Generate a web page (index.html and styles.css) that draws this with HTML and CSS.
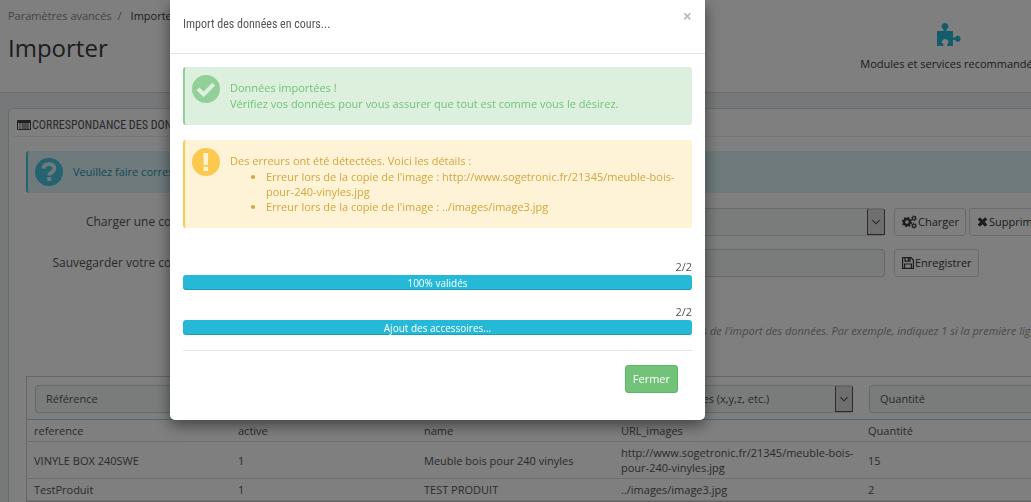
FILE: index.html
```html
<!DOCTYPE html>
<html lang="fr">
<head>
<meta charset="utf-8">
<title>Importer</title>
<link rel="stylesheet" href="styles.css">
</head>
<body>
<div class="page">
  <header class="page-head">
    <div>
      <nav class="breadcrumb"><a href="#">Paramètres avancés</a><span class="slash">/</span><span class="current">Importer</span></nav>
      <h1>Importer</h1>
    </div>
    <a class="tool" href="#">
      <svg width="26" height="26" viewBox="0 0 26 26" aria-hidden="true"><path fill="#25b9d7" d="M1 9h6.500V7.200C5.800 6 5.300 4.800 5.700 3.400 6.200 2 7.400 1 9 1s2.900 1 3.300 2.400c.4 1.400-.1 2.700-1.700 3.800V9H17v6.500h2c1-1.600 2-2 3.200-1.800 1.500.3 2.500 1.500 2.500 3s-1 2.800-2.500 3.100c-1.200.2-2.200-.3-3.200-1.800h-2V24h-6v-1.600c1.300-1 1.700-1.900 1.400-3-.4-1.400-1.600-2.400-3.200-2.400s-2.900 1-3.200 2.400c-.3 1.100.2 2 1.500 3V24H1z"/></svg>
      <span>Modules et services recommandés</span>
    </a>
  </header>

  <main class="panel">
    <h2 class="panel-title">
      <svg width="14" height="12" viewBox="0 0 14 12" aria-hidden="true"><path fill="#444" fill-rule="evenodd" d="M1 1h12q1 0 1 1v8q0 1-1 1H1q-1 0-1-1V2q0-1 1-1zM1 4v6h12V4zM2 4.500h1.500v1H2zM4.500 4.500H12v1H4.500zM2 6.500h1.500v1H2zM4.500 6.500H12v1H4.500zM2 8.500h1.500v1H2zM4.500 8.500H12v1H4.500z"/></svg>
      Correspondance des données
    </h2>
    <div class="panel-body">
      <div class="alert info">
        <svg class="alert-icon" viewBox="0 0 28 28" aria-hidden="true"><circle cx="14" cy="14" r="14" fill="#4ac7e0"/><path d="M8.500 10.500C9 7.500 11.300 6 14 6c3.200 0 5.300 1.900 5.300 4.500 0 3.800-5 3.600-5 7" fill="none" stroke="#dcf4f9" stroke-width="4"/><path fill="#dcf4f9" d="M12.200 19h4v4h-4z"/></svg>
        <p>Veuillez faire correspondre chaque colonne de votre fichier source à l'une des colonnes de destination.</p>
      </div>

      <div class="form-row">
        <label for="load">Charger une configuration</label>
        <span class="select"><select id="load"><option></option></select><svg class="drop" viewBox="0 0 18 26" aria-hidden="true"><path d="M5 11l4 4 4-4"/></svg></span>
        <span class="buttons">
          <button type="button"><svg width="15" height="14" viewBox="0 0 15 14" aria-hidden="true"><circle cx="5" cy="7" r="3" fill="none" stroke="#363a41" stroke-width="2.400"/><circle cx="5" cy="7" r="4.500" fill="none" stroke="#363a41" stroke-width="1.600" stroke-dasharray="1.700 1.830"/><circle cx="12" cy="3.300" r="1.600" fill="none" stroke="#363a41" stroke-width="1.200"/><circle cx="12" cy="3.300" r="2.500" fill="none" stroke="#363a41" stroke-width="1" stroke-dasharray="1.100 1.500"/><circle cx="12" cy="10.700" r="1.600" fill="none" stroke="#363a41" stroke-width="1.200"/><circle cx="12" cy="10.700" r="2.500" fill="none" stroke="#363a41" stroke-width="1" stroke-dasharray="1.100 1.500"/></svg>Charger</button>
          <button type="button"><svg width="11" height="12" viewBox="0 0 11 12" aria-hidden="true"><path d="M1.800 2.300l7.400 7.400M9.200 2.300L1.800 9.700" stroke="#363a41" stroke-width="3.200"/></svg>Supprimer</button>
        </span>
      </div>
      <div class="form-row">
        <label for="save">Sauvegarder votre configuration</label>
        <input id="save" type="text">
        <span class="buttons">
          <button type="button"><svg width="12" height="12" viewBox="0 0 12 12" aria-hidden="true"><path d="M.600.600h8.400l2.400 2.400v8.400H.600zM3 .600v3.600h5V.600M2.600 11V7h6.800v4" fill="none" stroke="#363a41" stroke-width="1.200"/><path d="M5.800 1h1.700v2.600H5.800z" fill="#363a41"/></svg>Enregistrer</button>
        </span>
      </div>
      <p class="help">Les lignes indiquées seront ignorées lors de l'import des données. Par exemple, indiquez 1 si la première ligne contient les titres.</p>

      <table>
        <colgroup><col class="c1"><col class="c2"><col class="c3"><col class="c4"><col></colgroup>
        <thead>
          <tr>
            <th><span class="select"><select aria-label="Colonne 1"><option>Référence</option></select><svg class="drop" viewBox="0 0 18 26" aria-hidden="true"><path d="M5 11l4 4 4-4"/></svg></span></th>
            <th><span class="select"><select aria-label="Colonne 2"><option>Actif (0/1)</option></select></span></th>
            <th><span class="select"><select aria-label="Colonne 3"><option>Nom</option></select></span></th>
            <th><span class="select"><select aria-label="Colonne 4"><option>URL des images (x,y,z, etc.)</option></select><svg class="drop" viewBox="0 0 18 26" aria-hidden="true"><path d="M5 11l4 4 4-4"/></svg></span></th>
            <th><span class="select"><select aria-label="Colonne 5"><option>Quantité</option></select><svg class="drop" viewBox="0 0 18 26" aria-hidden="true"><path d="M5 11l4 4 4-4"/></svg></span></th>
          </tr>
        </thead>
        <tbody>
          <tr><td>reference</td><td>active</td><td>name</td><td>URL_images</td><td>Quantité</td></tr>
          <tr><td>VINYLE BOX 240SWE</td><td>1</td><td>Meuble bois pour 240 vinyles</td><td>http://www.sogetronic.fr/21345/meuble-bois-pour-240-vinyles.jpg</td><td>15</td></tr>
          <tr><td>TestProduit</td><td>1</td><td>TEST PRODUIT</td><td>../images/image3.jpg</td><td>2</td></tr>
        </tbody>
      </table>
    </div>
  </main>
</div>

<div class="backdrop">
  <section class="modal" role="dialog" aria-labelledby="modal-title">
    <header class="modal-head">
      <h3 id="modal-title">Import des données en cours...</h3>
      <button class="close" type="button" aria-label="Fermer la fenêtre">×</button>
    </header>
    <div class="modal-body">
      <div class="alert success">
        <svg class="alert-icon" viewBox="0 0 28 28" aria-hidden="true"><circle cx="14" cy="14" r="14" fill="#92d097"/><path d="M6 13.800l5.600 5.600L21.800 9.200" fill="none" stroke="#ddf0de" stroke-width="4"/></svg>
        <p>Données importées !<br>Vérifiez vos données pour vous assurer que tout est comme vous le désirez.</p>
      </div>
      <div class="alert warning">
        <svg class="alert-icon" viewBox="0 0 28 28" aria-hidden="true"><circle cx="14" cy="14" r="14" fill="#fcc94f"/><path fill="#fff3d7" d="M11.300 5h5l-.5 12h-4zM11.500 18.800h4.600v4.200h-4.600z"/></svg>
        <div>
          <p>Des erreurs ont été détectées. Voici les détails :</p>
          <ul>
            <li>Erreur lors de la copie de l'image : http://www.sogetronic.fr/21345/meuble-bois-pour-240-vinyles.jpg</li>
            <li>Erreur lors de la copie de l'image : ../images/image3.jpg</li>
          </ul>
        </div>
      </div>
      <div class="steps">
        <div class="step"><span>2/2</span><div class="bar" role="progressbar" aria-valuenow="100">100% validés</div></div>
        <div class="step"><span>2/2</span><div class="bar" role="progressbar" aria-valuenow="100">Ajout des accessoires...</div></div>
      </div>
      <footer class="modal-foot"><button class="done" type="button">Fermer</button></footer>
    </div>
  </section>
</div>
</body>
</html>
```
FILE: styles.css
```css
* { box-sizing: border-box; }
html, body { margin: 0; height: 100%; overflow: hidden; }
body {
  background: #eff1f2;
  color: #555;
  font: 11px/16px "Open Sans", "Noto Sans", sans-serif;
}
h1, h2, h3, p, ul { margin: 0; font-weight: 400; }
button, input, select { font: inherit; color: inherit; }

/* The work area runs past the right edge of the window. */
.page { width: calc(100% + 60px); }

.page-head {
  display: flex;
  justify-content: space-between;
  height: 93px;
  padding: 8px 53px 0 8px;
  background: #fff;
  border-bottom: 1px solid #d8d8d8;
}
.breadcrumb a { color: #888; text-decoration: none; }
.slash { margin: 0 9px 0 6px; color: #789; }
.current, h1, .tool { color: #363a41; }
h1 { margin-top: 6px; font-size: 24px; line-height: 36px; }
.tool {
  display: flex;
  flex-direction: column;
  align-items: center;
  gap: 8px;
  padding-top: 14px;
  text-decoration: none;
}

.panel {
  margin: 15px 8px 0;
  padding: 4px;
  background: #fff;
  border: 1px solid #d3d8db;
  border-radius: 5px;
}
.panel-title, .modal-head h3 {
  font-family: "Ubuntu Condensed", "Roboto Condensed", Roboto, sans-serif;
  font-size: 12px;
}
.panel-title {
  display: flex;
  align-items: center;
  gap: 1px;
  height: 24px;
  padding-left: 4px;
  border-bottom: 1px solid #eee;
  text-transform: uppercase;
}
.panel-body { padding: 14px 13px; }

.alert {
  display: flex;
  gap: 10px;
  padding: 13px 13px 13px 7px;
  border-left: 2px solid;
  border-radius: 3px;
}
.alert-icon { flex: none; width: 28px; height: 28px; margin-top: -5px; }
.info { align-items: center; padding-top: 7px; padding-bottom: 7px; background: #dcf4f9; border-color: #4ac7e0; color: #1e94ab; }
.info .alert-icon { margin-top: 0; }
.success { background: #ddf0de; border-color: #92d097; color: #72c279; }
.warning { background: #fff3d7; border-color: #fcc94f; color: #d2a63c; }
.warning ul { padding: 0 0 1px 36px; line-height: 15px; }

.form-row {
  display: grid;
  grid-template-columns: 207px minmax(0, 1fr) 171px;
  gap: 9px;
  align-items: center;
  margin-top: 13px;
}
.alert + .form-row { margin-top: 15px; }
.form-row label { font-size: 12px; text-align: right; }
.buttons { display: flex; gap: 3px; }
.buttons button {
  display: flex;
  align-items: center;
  gap: 1px;
  height: 28px;
  padding: 0 6px 0 7px;
  background: #fff;
  border: 1px solid #d6d6d6;
  border-radius: 3px;
  color: #363a41;
}
select, input {
  width: 100%;
  height: 28px;
  padding: 0 10px;
  appearance: none;
  background: #f5f8f9;
  border: 1px solid #c7d6db;
  border-radius: 3px;
}
.select { display: grid; }
.select > * { grid-area: 1 / 1; }
.drop {
  justify-self: end;
  width: 18px;
  height: 26px;
  margin: 1px 0;
  background: #dedede;
  border: 1px solid #555;
  border-top-color: #ccc;
  pointer-events: none;
}
.drop path { fill: none; stroke: #444; stroke-width: 1.2; }
.help {
  margin: 46px 0 37px 487px;
  color: #959595;
  font-style: italic;
  white-space: nowrap;
}

table {
  width: 100%;
  table-layout: fixed;
  border: 1px solid #ccc;
  border-spacing: 0;
}
.c1 { width: 204px; }
.c2 { width: 186px; }
.c3 { width: 197px; }
.c4 { width: 247px; }
th { padding: 8px 8px 6px; border-bottom: 1px solid #a0d0eb; font-weight: 400; }
td { padding: 3px 7px; border-bottom: 1px solid #dedede; line-height: 15px; }

.backdrop {
  position: fixed;
  inset: 0;
  padding-left: 170px;
  background: rgba(0, 0, 0, .5);
}
.modal {
  width: 535px;
  max-width: 100%;
  background: #fff;
  border-radius: 0 0 5px 5px;
  box-shadow: 0 5px 15px rgba(0, 0, 0, .5);
}
.modal-head {
  display: flex;
  justify-content: space-between;
  height: 54px;
  padding: 8px 13px;
  border-bottom: 1px solid #e5e5e5;
}
.modal-head h3 { padding-top: 8px; }
.close { height: 16px; padding: 0; background: none; border: 0; color: #bbb; font-size: 16px; font-weight: 700; line-height: 16px; }
.modal-body { padding: 13px 13px 27px; }
.modal .alert + .alert { margin-top: 15px; }
.steps { display: grid; gap: 14px; padding: 31px 0 15px; }
.step { display: grid; }
.step span { text-align: right; }
.bar {
  height: 15px;
  background: #25b9d7;
  border-radius: 3px;
  box-shadow: inset 0 -1px 0 rgba(0, 0, 0, .15);
  color: #fff;
  font-size: 10px;
  text-align: center;
}
.modal-foot { display: flex; justify-content: flex-end; padding: 14px 14px 0; border-top: 1px solid #e5e5e5; }
.done { height: 28px; padding: 0 7px; background: #72c279; border: 1px solid #5cb863; border-radius: 3px; color: #fff; }
```
